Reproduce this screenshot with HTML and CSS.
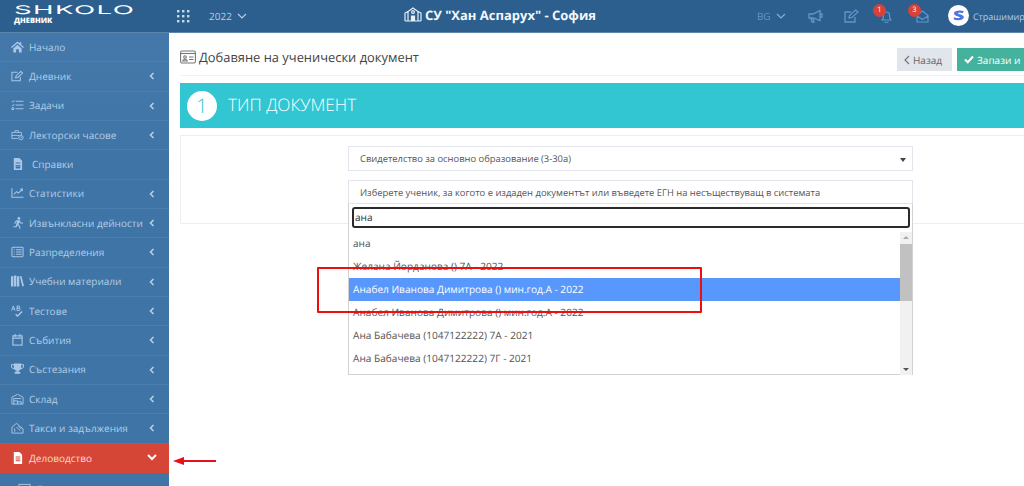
FILE: index.html
```html
<!DOCTYPE html>
<html lang="bg">
<head>
<meta charset="utf-8">
<title>Shkolo</title>
<link rel="stylesheet" href="styles.css">
</head>
<body>
<svg class="defs" width="0" height="0">
  <defs>
    <symbol id="chev" viewBox="0 0 8 10"><path d="M6 1 2 5l4 4" fill="none" stroke="currentColor" stroke-width="2"/></symbol>
    <symbol id="down" viewBox="0 0 10 8"><path d="M1 2l4 4 4-4" fill="none" stroke="currentColor" stroke-width="1.2"/></symbol>
  </defs>
</svg>
<div class="app">
  <header class="topbar">
    <div class="logo">
      <span class="logo-main">SHKOLO</span>
      <span class="logo-sub">ДНЕВНИК</span>
    </div>
    <svg class="apps" width="13" height="13" viewBox="0 0 13 13" fill="#c9d9ea"><rect x="0" y="0" width="2.4" height="2.4"/><rect x="5" y="0" width="2.4" height="2.4"/><rect x="10" y="0" width="2.4" height="2.4"/><rect x="0" y="5" width="2.4" height="2.4"/><rect x="5" y="5" width="2.4" height="2.4"/><rect x="10" y="5" width="2.4" height="2.4"/><rect x="0" y="10" width="2.4" height="2.4"/><rect x="5" y="10" width="2.4" height="2.4"/><rect x="10" y="10" width="2.4" height="2.4"/></svg>
    <span class="year">2022</span>
    <svg class="year-chev" width="10" height="8"><use href="#down"/></svg>
    <div class="school">
      <svg width="18" height="15" viewBox="0 0 18 15" fill="none" stroke="#e8eff6" stroke-width="1.2"><path d="M1 14V6l3-1.5M17 14V6l-3-1.500M4 14V4.500L9 1l5 3.500V14M1 14h16"/><circle cx="9" cy="5" r="1.400"/><path d="M7.500 14V9h3v5" fill="#e8eff6"/></svg>
      <span>СУ "Хан Аспарух" - София</span>
    </div>
    <span class="lang">BG</span>
    <svg class="lang-chev" width="10" height="8"><use href="#down"/></svg>
    <svg class="ti ti-mega" width="15" height="14" viewBox="0 0 15 14" fill="none" stroke="#5f97cc" stroke-width="1.300"><path d="M1 5h4l7-3.500v10L5 9H1zM12.500 5H14v3h-1.500M3 9l1 4h2L5 9"/></svg>
    <svg class="ti ti-edit" width="15" height="14" viewBox="0 0 15 14" fill="none" stroke="#5f97cc" stroke-width="1.300"><path d="M11 8v5H1V3h6"/><path d="M5 9l.5-2.500L11.500 1 14 3 8 8.500z"/></svg>
    <div class="ti ti-bell">
      <svg width="11" height="13" viewBox="0 0 11 13" fill="none" stroke="#5f97cc" stroke-width="1.200"><path d="M1 10c1.500-1 1.500-3 1.500-5a3 3 0 0 1 6 0c0 2 0 4 1.500 5zM4 11.500a1.500 1.500 0 0 0 3 0"/></svg>
      <span class="badge">1</span>
    </div>
    <div class="ti ti-mail">
      <svg width="13" height="13" viewBox="0 0 13 13" fill="none" stroke="#5f97cc" stroke-width="1.200"><path d="M1 5.500 6.500 1 12 5.500V12H1zM1 6l5.500 3.500L12 6"/></svg>
      <span class="badge">3</span>
    </div>
    <div class="avatar"><span>S</span></div>
    <span class="user">Страшимир</span>
  </header>

  <div class="body">
    <nav class="sidebar">
      <a class="item"><svg class="ic" viewBox="0 0 14 12" fill="currentColor"><path d="M7 0 0 6l1 1 6-5 6 5 1-1-3-2.500V1H9v1zM2.500 7.500 7 3.500l4.500 4V12H8.500V8.500h-3V12h-3z"/></svg><span>Начало</span></a>
      <a class="item"><svg class="ic" viewBox="0 0 14 12" fill="none" stroke="currentColor" stroke-width="1.100"><path d="M10 7v4H1V2h6"/><path d="M5 8l.4-2L10.500 1 12.500 2.800 7.300 7.600z"/></svg><span>Дневник</span><svg class="arr"><use href="#chev"/></svg></a>
      <a class="item"><svg class="ic" viewBox="0 0 14 12" fill="none" stroke="currentColor" stroke-width="1"><path d="M5 2h8.500M5 6h8.500M5 10h8.500M1 2l1 1 1.500-2M1 6l1 1 1.500-2M1 9h2v2H1z"/></svg><span>Задачи</span><svg class="arr"><use href="#chev"/></svg></a>
      <a class="item"><svg class="ic" viewBox="0 0 15 12" fill="none" stroke="currentColor" stroke-width="1"><path d="M8 10H1V3h11v3M1 6.500h9M4.500 3V1h4v2"/><circle cx="11.500" cy="9" r="2.500"/><path d="M11.500 7.800V9h1"/></svg><span>Лекторски часове</span><svg class="arr"><use href="#chev"/></svg></a>
      <a class="item ref"><svg class="ic" viewBox="0 0 14 13" fill="currentColor"><path d="M3 0h6l3 3v10H3zM5 5v1h5V5zM5 7.500v4h5v-4zM6 8.500h1v1H6zM8 8.500h1v1H8z" fill-rule="evenodd"/></svg><span>Справки</span></a>
      <a class="item"><svg class="ic" viewBox="0 0 14 12" fill="none" stroke="currentColor" stroke-width="1.100"><path d="M1 1v9.500h12.500M3 7.500l3-3 2 1.500 4-4M10 1.800h2.200V4"/></svg><span>Статистики</span><svg class="arr"><use href="#chev"/></svg></a>
      <a class="item"><svg class="ic" viewBox="0 0 14 13" fill="currentColor"><circle cx="8.500" cy="1.500" r="1.500"/><path d="M6 3.500h3.500l1 2.500h2.500v1h-3.200L9 5.500 8 8l2 2v3H9v-2.500L6.800 9 6 11H2.500v-1H5l1.500-5-1.200.5L4.500 7.500l-1-.4L4.500 4.500z"/></svg><span>Извънкласни дейности</span><svg class="arr"><use href="#chev"/></svg></a>
      <a class="item"><svg class="ic" viewBox="0 0 14 12" fill="none" stroke="currentColor" stroke-width="1.100"><rect x="1" y="1" width="12" height="10" rx="1"/><path d="M3 3.500h1M5.500 3.500h6M3 6h1M5.500 6h6M3 8.500h1M5.500 8.500h6"/></svg><span>Разпределения</span><svg class="arr"><use href="#chev"/></svg></a>
      <a class="item"><svg class="ic" viewBox="0 0 14 12" fill="currentColor"><path d="M0 1h2.500v11H0zM3.200 0h2.500v12H3.200zM6.400 1h2.500v11H6.400zM9.500 1l1.800-.5L14 11.500l-1.800.5z"/></svg><span>Учебни материали</span><svg class="arr"><use href="#chev"/></svg></a>
      <a class="item"><svg class="ic" viewBox="0 0 14 13" fill="none" stroke="currentColor" stroke-width="1.400"><path d="M5 10l2 2 5-5" stroke-width="1.500"/><path d="M.7 6 2.500 1l1.800 5M1.400 4.300h2.200M6.500 1v5h2a1.200 1.200 0 0 0 0-2.500h-2m0 0h1.700a1.200 1.200 0 0 0 0-2.500H6.500" stroke-width="1"/></svg><span>Тестове</span><svg class="arr"><use href="#chev"/></svg></a>
      <a class="item"><svg class="ic" viewBox="0 0 14 13" fill="none" stroke="currentColor" stroke-width="1.200"><rect x="2" y="2" width="10" height="10"/><path d="M2 4.500h10M4.500 0v3M9.500 0v3"/></svg><span>Събития</span><svg class="arr"><use href="#chev"/></svg></a>
      <a class="item"><svg class="ic" viewBox="0 0 14 12" fill="currentColor"><path d="M3 0h8v1h3v2c0 2-2 3-3.500 3.200C10 7 9 7.500 8 7.800V9h2v2H4V9h2V7.800C5 7.500 4 7 3.500 6.200 2 6 0 5 0 3V1h3zM1 2v1c0 1 1 2 2.200 2.200L3 2zm12 0h-2l-.2 3.200C12 5 13 4 13 3z" fill-rule="evenodd"/></svg><span>Състезания</span><svg class="arr"><use href="#chev"/></svg></a>
      <a class="item"><svg class="ic" viewBox="0 0 14 12" fill="none" stroke="currentColor" stroke-width="1"><path d="M1 11.500V4l6-3 6 3v7.500zM3 11.500V5.500h8M3 8h4v3.500M7 9h4v2.500"/></svg><span>Склад</span><svg class="arr"><use href="#chev"/></svg></a>
      <a class="item"><svg class="ic" viewBox="0 0 14 12" fill="none" stroke="currentColor" stroke-width="1"><path d="M1 11.500V5l5-4 7 6v4.500zM3 7h1v3M6 5l4 4M8 4l3 3"/></svg><span>Такси и задължения</span><svg class="arr"><use href="#chev"/></svg></a>
      <a class="item active"><svg class="ic" viewBox="0 0 14 13" fill="#fff"><path d="M3 0h6l3 3v10H3zM5 5v1h5V5zM5 7v1h5V7zM5 9v1h5V9z" fill-rule="evenodd"/></svg><span>Деловодство</span><svg class="arr-down" viewBox="0 0 10 8"><path d="M1 2l4 4 4-4" fill="none" stroke="#fff" stroke-width="2"/></svg></a>
      <a class="item sub"><svg class="ic" viewBox="0 0 14 12" fill="none" stroke="currentColor" stroke-width="1"><rect x="1" y="1" width="12" height="10"/></svg><span>Д</span></a>
    </nav>

    <main class="main">
      <div class="page-head">
        <svg class="id-ic" width="16" height="14" viewBox="0 0 16 14" fill="none" stroke="#777" stroke-width="1.100"><rect x=".6" y="1" width="14.800" height="12" rx="1.500"/><path d="M.6 3.500h14.800"/><circle cx="5" cy="7" r="1.300"/><path d="M2.800 11c0-2 4.400-2 4.400 0zM9 7h4.500M9 9.500h4.500"/></svg>
        <h1>Добавяне на ученически документ</h1>
        <div class="actions">
          <a class="btn back"><svg width="6" height="10" viewBox="0 0 6 10" fill="none" stroke="#777" stroke-width="1.200"><path d="M5 1 1 5l4 4"/></svg>Назад</a>
          <a class="btn save"><svg width="10" height="9" viewBox="0 0 10 9" fill="none" stroke="#fff" stroke-width="2"><path d="M1 4.500 3.800 7.200 9 1.500"/></svg>Запази и</a>
        </div>
      </div>
      <div class="step">
        <span class="num">1</span>
        <span class="step-title">ТИП ДОКУМЕНТ</span>
      </div>
      <section class="card">
        <div class="field sel">
          <span>Свидетелство за основно образование (3-30а)</span>
          <i class="caret"></i>
        </div>
        <div class="field student">
          <span>Изберете ученик, за когото е издаден документът или въведете ЕГН на несъществуващ в системата</span>
          <div class="dropdown">
            <div class="search">ана</div>
            <div class="list-wrap">
              <ul class="list">
                <li>ана</li>
                <li>Желана Йорданова () 7А - 2022</li>
                <li class="hl">Анабел Иванова Димитрова () мин.год.А - 2022</li>
                <li>Анабел Иванова Димитрова () мин.год.А - 2022</li>
                <li>Ана Бабачева (1047122222) 7А - 2021</li>
                <li>Ана Бабачева (1047122222) 7Г - 2021</li>
              </ul>
              <div class="scrollbar">
                <i class="up"></i>
                <div class="thumb"></div>
                <i class="dn"></i>
              </div>
            </div>
          </div>
        </div>
      </section>
    </main>
  </div>
</div>
<div class="mark-box"></div>
<svg class="mark-arrow" width="44" height="10" viewBox="0 0 44 10"><path d="M0 5 11 1v3h32v2H11v3z" fill="#e8101c"/></svg>
</body>
</html>
```
FILE: styles.css
```css
* { box-sizing: border-box; }
html, body { margin: 0; padding: 0; width: 1024px; height: 486px; overflow: hidden; background: #fff; }
body { font-family: "Open Sans", "Noto Sans", sans-serif; color: #555; position: relative; text-rendering: geometricPrecision; }
.defs { position: absolute; }
.app { width: 1024px; height: 486px; display: flex; flex-direction: column; overflow: hidden; }

.topbar { flex: 0 0 33px; display: flex; align-items: center; background: #2c5f8d; border-bottom: 1px solid #5b86ac; position: relative; white-space: nowrap; color: #fff; overflow: hidden; }
.logo { width: 169px; height: 32px; padding: 3px 0 0 14px; display: flex; flex-direction: column; flex: none; }
.logo-main { font-family: "Inter", sans-serif; font-weight: 400; font-size: 12px; line-height: 13px; letter-spacing: .6px; transform: scaleX(2.3); transform-origin: left center; color: #fff; }
.logo-sub { font-family: "Open Sans", sans-serif; font-weight: 800; font-size: 7.5px; line-height: 9px; margin-top: 1px; }
.apps { margin-left: 8px; flex: none; }
.year { margin-left: 19px; font-size: 10px; color: #b5cde6; flex: none; }
.year-chev { margin-left: 5px; color: #b5cde6; flex: none; }
.school { margin-left: 157px; width: 210px; display: flex; align-items: center; gap: 3px; font-weight: 700; font-size: 13px; color: #f3f7fb; flex: none; margin-top: -3px; }
.lang { margin-left: 143px; font-size: 10px; color: #5f97cc; width: 15px; flex: none; }
.lang-chev { margin-left: 4px; color: #7fb0dd; flex: none; }
.ti { flex: none; position: relative; display: block; }
.ti-mega { margin-left: 22px; }
.ti-edit { margin-left: 21px; }
.ti-bell { margin-left: 22px; height: 13px; margin-top: 1px; }
.ti-mail { margin-left: 24px; height: 13px; margin-top: 1px; }
.ti svg { display: block; }
.badge { position: absolute; left: -8px; top: -6px; width: 13px; height: 13px; border-radius: 50%; background: #d6423a; color: #fff; font-size: 7.5px; line-height: 13px; text-align: center; }
.ti-mail .badge { left: -8px; }
.avatar { margin-left: 19px; width: 21px; height: 21px; border-radius: 50%; background: #fff; flex: none; display: flex; align-items: center; justify-content: center; color: #4a78e0; font-size: 13px; font-weight: 800; margin-top: -2px; }
.avatar span { display: block; line-height: 21px; transform: scaleX(1.5); }
.user { margin-left: 4px; font-size: 9px; color: #b5cde6; flex: none; }

.body { flex: 1 1 auto; min-height: 0; display: flex; }
.sidebar { width: 169px; flex: none; background: linear-gradient(#4478aa, #3f75a6 30%); overflow: hidden; }
.item { height: 29.33px; display: flex; align-items: center; padding: 0 0 1px 11px; border-bottom: 1px solid #4a7fb0; color: #b3cde7; font-size: 10px; position: relative; }
.item span { margin-left: 5px; white-space: nowrap; }
.ref span { margin-left: 8px; }
.ic { width: 13px; height: 12px; flex: none; color: #a9c8e8; }
.arr { position: absolute; left: 149px; top: 10px; width: 6px; height: 8px; color: #b9d2ea; }
.arr-down { position: absolute; left: 147px; top: 9px; width: 10px; height: 8px; }
.active { background: #d64636; color: #f6dcd8; border-bottom: 0; }
.sub { padding: 0 0 0 18px; border-bottom: 0; height: 32px; }

.main { flex: 1 1 auto; min-width: 0; overflow: hidden; padding: 0 0 0 11px; }
.page-head { width: 860px; height: 43px; display: flex; align-items: center; border-bottom: 1px solid #f3f3f3; padding-top: 14px; padding-bottom: 3px; }
.id-ic { flex: none; margin-right: 3px; margin-top: -5px; }
h1 { margin: -5px 0 0; font-size: 12.9px; font-weight: 400; color: #444; white-space: nowrap; }
.actions { margin-left: auto; display: flex; gap: 5px; flex: none; margin-right: -47px; }
.btn { height: 23px; display: flex; align-items: center; gap: 3px; padding: 0 7px; font-size: 10px; white-space: nowrap; }
.back { width: 55px; background: #e1e5ec; color: #666; }
.save { width: 130px; background: #45b29d; color: #fff; }

.step { width: 860px; height: 45px; margin-top: 7px; background: #32c5d2; display: flex; align-items: center; padding-left: 7px; }
.num { width: 30px; height: 30px; border-radius: 50%; background: #fff; color: #32c5d2; font-size: 20px; line-height: 30px; text-align: center; font-weight: 300; }
.step-title { margin-left: 11px; font-size: 17.2px; font-weight: 300; color: #fff; }

.card { width: 860px; height: 89px; margin-top: 7px; border: 1px solid #eee; padding: 10px 0 0 167px; }
.field { width: 565px; border: 1px solid #e1e5ec; font-size: 9.4px; color: #555; padding-left: 11px; display: flex; align-items: center; position: relative; }
.sel { height: 25px; }
.caret { position: absolute; right: 6px; top: 11px; border-left: 3px solid transparent; border-right: 3px solid transparent; border-top: 4px solid #444; }
.student { height: 24px; margin-top: 9px; }
.dropdown { position: absolute; left: -1px; top: 22px; width: 565px; height: 172px; background: #fff; border: 1px solid #d2d2d2; border-top-color: #e1e5ec; padding: 3px 2px 0 3px; z-index: 2; }
.search { height: 21px; border: 2px solid #2b2b2b; border-radius: 3px; font-size: 10.1px; line-height: 17px; padding-left: 1px; color: #333; }
.list-wrap { display: flex; margin-top: 4px; margin-right: -2px; margin-left: -3px; height: 143px; }
.list { list-style: none; margin: 0; padding: 0; flex: 1 1 auto; overflow: hidden; font-size: 10.1px; color: #555; }
.list li { height: 23px; line-height: 23px; padding-left: 4px; white-space: nowrap; }
.list .hl { background: #5897fb; color: #fff; }
.scrollbar { width: 12px; flex: none; background: #f1f1f1; position: relative; padding: 12px 0; }
.thumb { height: 57px; background: #c1c1c1; }
.up, .dn { position: absolute; left: 3px; border-left: 3px solid transparent; border-right: 3px solid transparent; }
.up { top: 4px; border-bottom: 3px solid #aaa; }
.dn { bottom: 4px; border-top: 3px solid #555; }

.mark-box { position: absolute; left: 317px; top: 267px; width: 385px; height: 46px; border: 2px solid #f00d0d; border-radius: 1px; z-index: 5; }
.mark-arrow { position: absolute; left: 173px; top: 456px; z-index: 5; }
```
